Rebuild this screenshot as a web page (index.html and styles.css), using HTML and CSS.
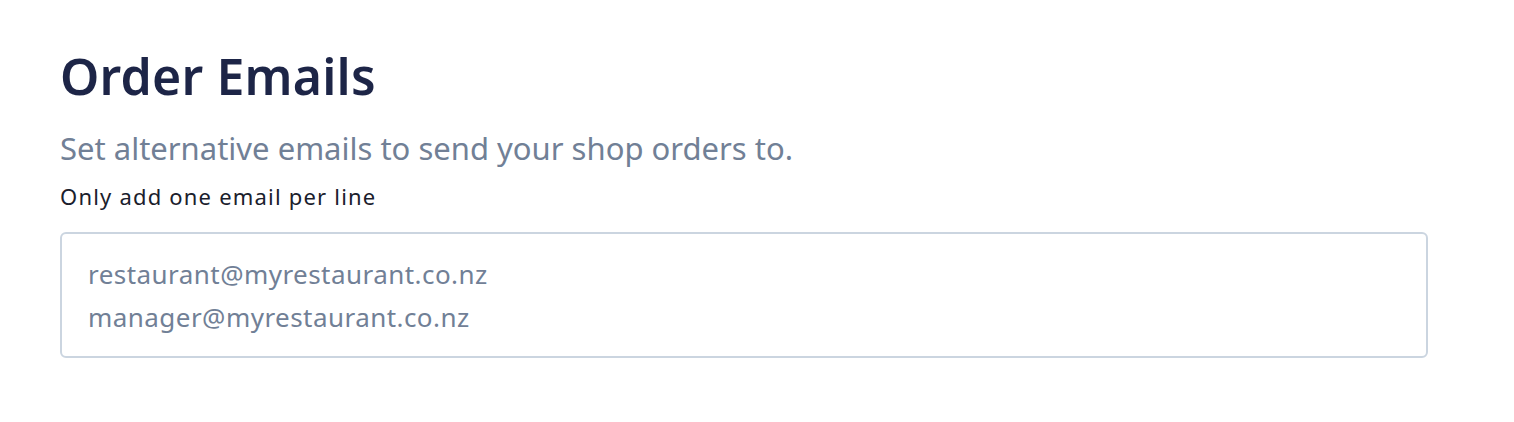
FILE: index.html
```html
<!DOCTYPE html>
<html lang="en">
<head>
  <meta charset="UTF-8">
  <title>Order Emails</title>
  <link rel="stylesheet" href="styles.css">
</head>
<body>

  <section class="settings">
    <h1>Order Emails</h1>
    <p class="lead">Set alternative emails to send your shop orders to.</p>

    <label class="field-label" for="order-emails">Only add one email per line</label>
    <textarea id="order-emails" class="email-box" rows="2">restaurant@myrestaurant.co.nz
manager@myrestaurant.co.nz</textarea>
  </section>

</body>
</html>
```

FILE: styles.css
```css
* { margin: 0; padding: 0; box-sizing: border-box; }
body {
  font-family: 'Noto Sans', sans-serif;
  background: #fff;
  color: #1a202c;
}
.settings {
  width: 1368px;
  margin: 0 60px;
  padding-top: 46px;
  display: flex;
  flex-direction: column;
}
h1 {
  font-size: 50px;
  font-weight: 600;
  color: #1d2547;
  line-height: 60px;
  letter-spacing: 0.2px;
}
.lead {
  margin-top: 22px;
  font-size: 31px;
  color: #718096;
  line-height: 40px;
}
.field-label {
  margin-top: 13px;
  font-size: 22px;
  line-height: 30px;
  letter-spacing: 1.2px;
  color: #1a202c;
}
.email-box {
  margin-top: 21px;
  width: 100%;
  height: 126px;
  padding: 19px 26px;
  border: 2px solid #cbd5e0;
  border-radius: 6px;
  font-family: inherit;
  font-size: 26px;
  line-height: 43px;
  letter-spacing: 0.45px;
  color: #718096;
  resize: none;
  outline: none;
  overflow: hidden;
}
```
